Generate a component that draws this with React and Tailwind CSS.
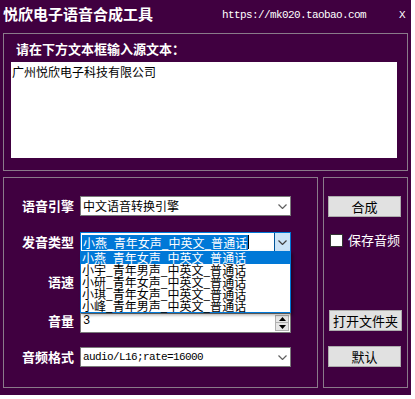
const cjk = { fontFamily: '"Noto Sans CJK SC", "Noto Sans", sans-serif' };
const mono = { fontFamily: '"Liberation Mono", "DejaVu Sans Mono", monospace' };

const voices = [
  '小燕_青年女声_中英文_普通话',
  '小宇_青年男声_中英文_普通话',
  '小研_青年女声_中英文_普通话',
  '小琪_青年女声_中英文_普通话',
  '小峰_青年男声_中英文_普通话',
];

function Chevron({ color = '#606060' }) {
  return (
    <svg width="9" height="5" viewBox="0 0 9 5" className="block">
      <path d="M0.5 0.5 L4.5 4.5 L8.5 0.5" fill="none" stroke={color} strokeWidth="1.2" />
    </svg>
  );
}

function Label({ children }) {
  return (
    <div className="w-[70px] text-right text-[13px] font-bold leading-[14px] text-white" style={cjk}>
      {children}
    </div>
  );
}

function Combo({ children, font = cjk }) {
  return (
    <div className="ml-[6px] flex h-[20px] w-[211px] items-center border border-[#7a7a7a] bg-white">
      <div className="flex-1 pl-[2px] text-[12px] leading-[14px] text-black" style={font}>
        {children}
      </div>
      <div className="flex w-[16px] justify-center">
        <Chevron />
      </div>
    </div>
  );
}

function Button({ children, className = '' }) {
  return (
    <div
      className={`flex h-[21px] w-[73px] items-center justify-center border border-[#adadad] bg-[#e1e1e1] text-[13px] leading-[14px] text-black ${className}`}
      style={cjk}
    >
      {children}
    </div>
  );
}

export default function App() {
  return (
    <div className="relative h-[395px] w-[411px] bg-[#400040] select-none">
      {/* title bar */}
      <div className="flex h-[33px] items-start pt-[5px] text-white">
        <div className="w-[222px] pl-[3px] text-[15px] font-bold leading-[18px]" style={cjk}>
          悦欣电子语音合成工具
        </div>
        <div className="w-[177px] pt-[4px] text-[11px] leading-[12px] tracking-[-0.6px]" style={mono}>
          https://mk020.taobao.com
        </div>
        <div className="pt-[4px] text-[11px] leading-[12px]" style={mono}>X</div>
      </div>

      {/* source text group */}
      <div className="ml-[3px] h-[138px] w-[405px] border border-[#8a7a8a]">
        <div className="pl-[12px] pt-[8px] text-[13px] font-bold leading-[14px] text-white" style={cjk}>
          请在下方文本框输入源文本：
        </div>
        <div className="ml-[7px] mt-[6px] h-[96px] w-[386px] bg-white pl-[1px] pt-[3px] text-[12px] leading-[14px] text-black" style={cjk}>
          广州悦欣电子科技有限公司
        </div>
      </div>

      <div className="ml-[3px] mt-[6px] flex gap-[5px]">
        {/* settings group */}
        <div className="relative h-[211px] w-[315px] border border-[#8a7a8a] pt-[18px]">
          <div className="flex h-[20px] items-center">
            <Label>语音引擎</Label>
            <Combo>中文语音转换引擎</Combo>
          </div>

          <div className="mt-[16px] flex h-[20px] items-center">
            <Label>发音类型</Label>
            <div className="ml-[6px] flex h-[20px] w-[211px] items-center border border-[#0078d7] bg-white">
              <div className="flex flex-1 items-center pl-[1px]">
                <span className="bg-[#0078d7] px-[1px] text-[12px] leading-[15px] text-white" style={cjk}>
                  {voices[0]}
                </span>
                <span className="h-[14px] w-px bg-black" />
              </div>
              <div className="flex h-[18px] w-[16px] items-center justify-center border-l border-[#005499] bg-[#cce4f7]">
                <Chevron color="#404040" />
              </div>
            </div>
          </div>

          <div className="mt-[20px] flex h-[20px] items-center">
            <Label>语速</Label>
            <div className="ml-[6px] h-[20px] w-[211px] border border-[#7a7a7a] bg-white" />
          </div>

          <div className="mt-[21px] flex h-[20px] items-start">
            <div className="pt-[1px]">
              <Label>音量</Label>
            </div>
            <div className="ml-[6px] flex h-[20px] w-[211px] border border-[#7a7a7a] bg-white">
              <div className="flex-1 pl-[2px] pt-[1px] text-[12px] leading-[12px] text-black" style={mono}>3</div>
              <div className="flex w-[15px] flex-col py-px pr-px">
                <div className="flex h-[8px] items-center justify-center border border-[#b0b0b0] bg-[#e6e6e6]">
                  <svg width="7" height="4" viewBox="0 0 7 4"><path d="M0 4 L3.5 0 L7 4 Z" fill="#000" /></svg>
                </div>
                <div className="flex h-[8px] items-center justify-center border border-t-0 border-[#b0b0b0] bg-[#e6e6e6]">
                  <svg width="7" height="4" viewBox="0 0 7 4"><path d="M0 0 L3.5 4 L7 0 Z" fill="#000" /></svg>
                </div>
              </div>
            </div>
          </div>

          <div className="mt-[14px] flex h-[20px] items-center">
            <Label>音频格式</Label>
            <Combo font={mono}>
              <span className="text-[11px] tracking-[-0.6px]">audio/L16;rate=16000</span>
            </Combo>
          </div>

          {/* open dropdown list */}
          <div className="absolute left-[76px] top-[73px] h-[62px] w-[211px] border border-[#0078d7] bg-white shadow-[2px_2px_3px_rgba(0,0,0,0.35)]">
            {voices.map((v, i) => (
              <div
                key={v}
                className={`h-[12px] pl-[1px] text-[12px] leading-[12px] ${i === 0 ? 'bg-[#0078d7] text-white' : 'text-black'}`}
                style={cjk}
              >
                {v}
              </div>
            ))}
          </div>
        </div>

        {/* action group */}
        <div className="h-[211px] w-[85px] border border-[#8a7a8a] pl-[4px] pt-[18px]">
          <Button>合成</Button>
          <div className="mt-[16px] flex items-center pl-[2px]">
            <div className="h-[13px] w-[13px] border border-[#333] bg-white" />
            <span className="ml-[5px] text-[13px] leading-[14px] text-white" style={cjk}>保存音频</span>
          </div>
          <Button className="ml-px mt-[63px] h-[20px]">打开文件夹</Button>
          <Button className="mt-[15px] h-[20px]">默认</Button>
        </div>
      </div>
    </div>
  );
}
